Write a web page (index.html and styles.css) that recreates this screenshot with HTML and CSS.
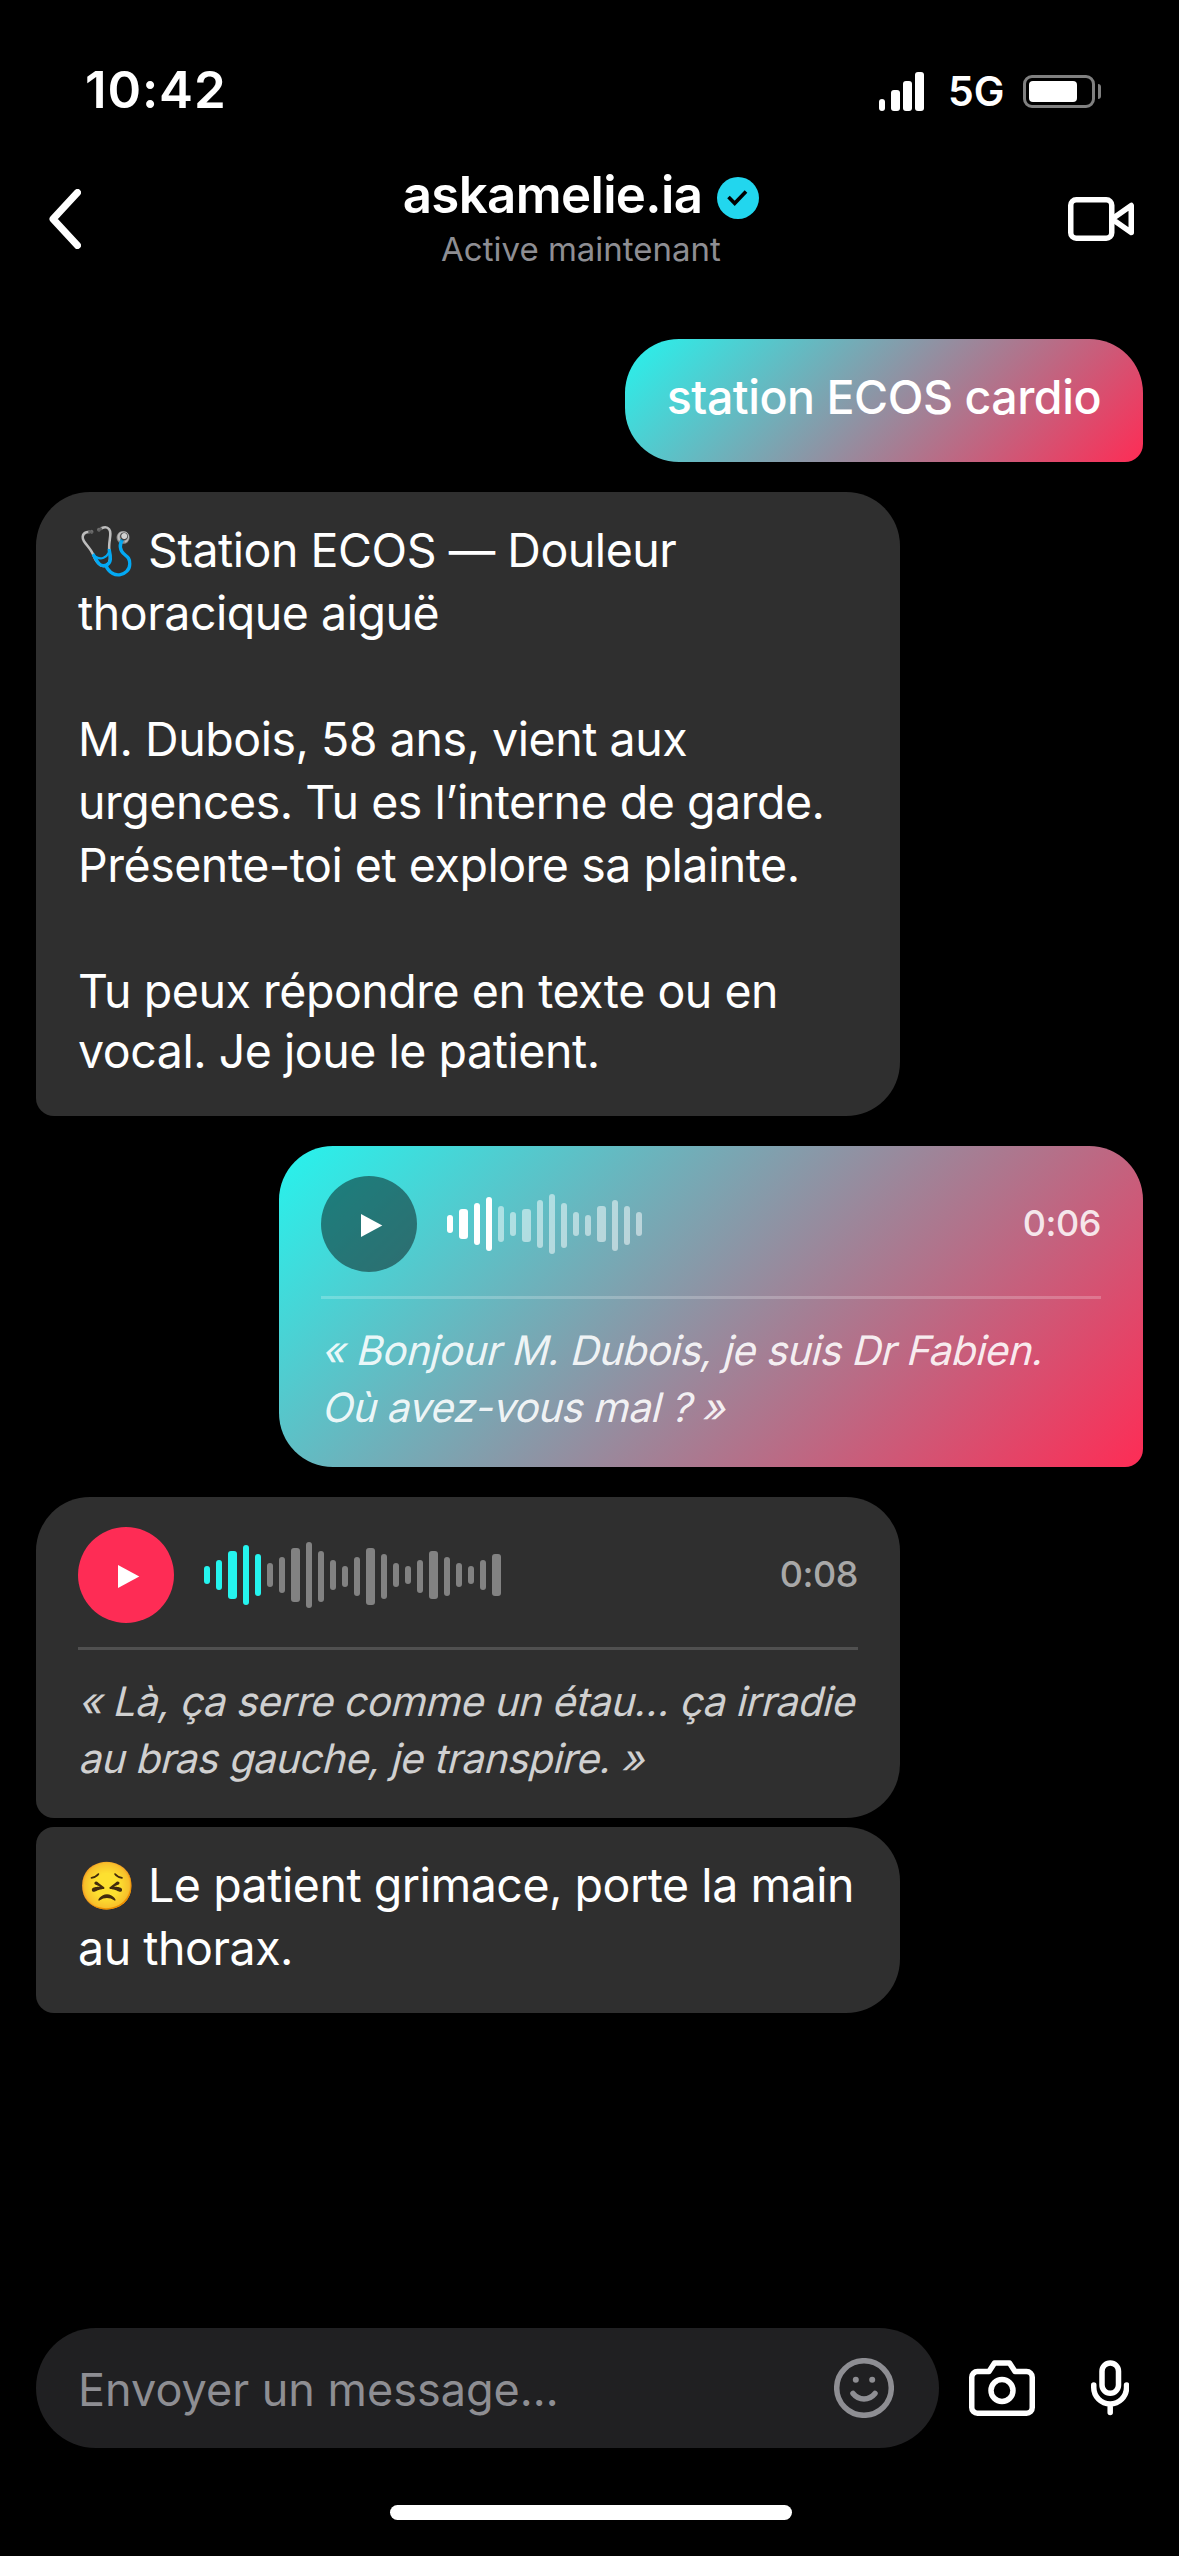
FILE: index.html
```html
<!DOCTYPE html>
<html lang="fr">
<head>
<meta charset="utf-8">
<title>askamelie.ia</title>
<link rel="stylesheet" href="styles.css">
</head>
<body>
<div class="screen">
  <div class="status">
    <span class="clock">10:42</span>
    <div class="status-right">
      <svg class="signal" viewBox="0 0 45 39"><rect x="0" y="27" width="6" height="12" rx="3"/><rect x="12" y="18" width="9" height="21" rx="3"/><rect x="24" y="9" width="9" height="30" rx="3"/><rect x="36" y="0" width="9" height="39" rx="3"/></svg>
      <span class="network">5G</span>
      <div class="battery"><div class="battery-case"><div class="battery-level"></div></div><div class="battery-tip"></div></div>
    </div>
  </div>
  <header class="header">
    <svg class="back" viewBox="0 0 32 60"><path d="M28.5 3.5 4 30l24.500 26.500"/></svg>
    <div class="contact">
      <div class="name">
        <span class="name-text">askamelie.ia</span>
        <svg class="verified" viewBox="0 0 42 42"><circle cx="21" cy="21" r="21"/><path d="M11.500 20l6.200 6.300L29 14.500"/></svg>
      </div>
      <div class="presence">Active maintenant</div>
    </div>
    <svg class="video" viewBox="0 0 66 44"><rect x="2.750" y="2.750" width="41" height="38.500" rx="5.500"/><path d="M44 22 63.250 8.500v27z"/></svg>
  </header>
  <main class="thread">
    <div class="bubble sent short">station ECOS cardio</div>
    <div class="bubble received">
      <p>🩺 Station ECOS — Douleur<br>thoracique aiguë</p>
      <p>M. Dubois, 58 ans, vient aux<br>urgences. Tu es l’interne de garde.<br>Présente-toi et explore sa plainte.</p>
      <p>Tu peux répondre en texte ou en <span class="last-line">vocal. Je joue le patient.</span></p>
    </div>
    <div class="bubble sent voice">
      <div class="player">
        <div class="play"><svg viewBox="0 0 96 96"><path d="M40 38l21.300 11.500L40 61z"/></svg></div>
        <svg class="wave" width="195" height="60" viewBox="0 0 195 60">
          <g class="played"><rect x="0" y="21" width="6" height="18" rx="3"/><rect x="12" y="15" width="9" height="30" rx="3"/><rect x="27" y="9" width="6" height="42" rx="3"/><rect x="39" y="3" width="6" height="54" rx="3"/></g>
          <g class="pending"><rect x="51" y="12" width="6" height="36" rx="3"/><rect x="63" y="18" width="6" height="24" rx="3"/><rect x="75" y="15" width="9" height="33" rx="3"/><rect x="90" y="6" width="6" height="48" rx="3"/><rect x="102" y="0" width="6" height="60" rx="3"/><rect x="114" y="9" width="6" height="45" rx="3"/><rect x="126" y="18" width="6" height="24" rx="3"/><rect x="138" y="21" width="6" height="21" rx="3"/><rect x="150" y="12" width="9" height="36" rx="3"/><rect x="165" y="6" width="6" height="51" rx="3"/><rect x="177" y="12" width="6" height="39" rx="3"/><rect x="189" y="18" width="6" height="24" rx="3"/></g>
        </svg>
        <span class="duration">0:06</span>
      </div>
      <p class="transcript"><span class="slanted">« Bonjour M. Dubois, je suis Dr Fabien.</span> <span class="slanted">Où avez-vous mal ? »</span></p>
    </div>
    <div class="bubble received voice">
      <div class="player">
        <div class="play"><svg viewBox="0 0 96 96"><path d="M40 38l21.300 11.500L40 61z"/></svg></div>
        <svg class="wave" width="297" height="66" viewBox="0 0 297 66">
          <g class="played"><rect x="0" y="24" width="6" height="18" rx="3"/><rect x="12" y="18" width="6" height="30" rx="3"/><rect x="24" y="9" width="9" height="48" rx="3"/><rect x="39" y="3" width="6" height="60" rx="3"/><rect x="51" y="12" width="6" height="42" rx="3"/></g>
          <g class="pending"><rect x="63" y="21" width="6" height="24" rx="3"/><rect x="75" y="15" width="6" height="36" rx="3"/><rect x="87" y="6" width="9" height="54" rx="3"/><rect x="102" y="0" width="6" height="66" rx="3"/><rect x="114" y="9" width="6" height="51" rx="3"/><rect x="126" y="18" width="6" height="30" rx="3"/><rect x="138" y="24" width="6" height="21" rx="3"/><rect x="150" y="15" width="6" height="39" rx="3"/><rect x="162" y="6" width="9" height="57" rx="3"/><rect x="177" y="12" width="6" height="45" rx="3"/><rect x="189" y="21" width="6" height="24" rx="3"/><rect x="201" y="24" width="6" height="18" rx="3"/><rect x="213" y="18" width="6" height="33" rx="3"/><rect x="225" y="9" width="9" height="48" rx="3"/><rect x="240" y="15" width="6" height="39" rx="3"/><rect x="252" y="21" width="6" height="24" rx="3"/><rect x="264" y="24" width="6" height="18" rx="3"/><rect x="276" y="18" width="6" height="30" rx="3"/><rect x="288" y="12" width="9" height="42" rx="3"/></g>
        </svg>
        <span class="duration">0:08</span>
      </div>
      <p class="transcript"><span class="slanted">« Là, ça serre comme un étau… ça irradie</span> <span class="slanted">au bras gauche, je transpire. »</span></p>
    </div>
    <div class="bubble received follow">😣 Le patient grimace, porte la main<br>au thorax.</div>
  </main>
  <footer class="composer">
    <div class="field">
      <span class="placeholder">Envoyer un message…</span>
      <svg class="smiley" viewBox="0 0 60 60"><circle class="line" cx="30" cy="30" r="27.300"/><path class="line" d="M19 35.500q4.500 5.500 11 5.500t11-5.500"/><circle cx="21.800" cy="21.800" r="3"/><circle cx="38.200" cy="21.800" r="3"/></svg>
    </div>
    <svg class="camera" viewBox="0 0 66 56"><path d="M8.500 11.500h11.500L25.500 3h15L46 11.500h11.500a5.750 5.750 0 0 1 5.750 5.750v30.250a5.750 5.750 0 0 1-5.750 5.750h-49a5.750 5.750 0 0 1-5.750-5.750v-30.250a5.750 5.750 0 0 1 5.750-5.750z"/><circle cx="33" cy="30.500" r="11"/></svg>
    <svg class="mic" viewBox="0 0 38 56"><rect x="11" y="3" width="16.500" height="30.300" rx="8.250"/><path d="M2.750 25v2.500a16.400 16.400 0 0 0 32.800 0V25M19.200 44v8.500"/></svg>
  </footer>
  <div class="home-bar"></div>
</div>
</body>
</html>
```
FILE: styles.css
```css
* { box-sizing: border-box; margin: 0; }
body { background: #000; color: #fff; font-family: Inter, "Noto Color Emoji", sans-serif; }
svg { display: block; flex: none; }

.screen { width: 1179px; height: 2556px; display: flex; flex-direction: column; overflow: hidden; }

.status { height: 159px; padding: 45px 78px 0 85px; display: flex; justify-content: space-between; align-items: flex-start; }
.clock { font-size: 51px; line-height: 89px; font-weight: 600; letter-spacing: .017em; }
.status-right { height: 93px; display: flex; align-items: center; }
.signal { width: 45px; height: 39px; fill: #fff; }
.network { width: 57px; margin: 0 18px 0 24px; padding-bottom: 2px; font-size: 41px; line-height: 60px; font-weight: 600; }
.battery { display: flex; align-items: center; gap: 3px; }
.battery-case { width: 72px; height: 33px; padding: 3px; border: 3px solid #808080; border-radius: 9px; }
.battery-level { width: 48px; height: 21px; border-radius: 4px; background: #fff; }
.battery-tip { width: 3px; height: 15px; border-radius: 0 3px 3px 0; background: #808080; }

.header { height: 120px; padding: 0 45px 0 49px; display: flex; justify-content: space-between; align-items: center; }
.back { width: 32px; height: 60px; fill: none; stroke: #fff; stroke-width: 7; stroke-linecap: round; stroke-linejoin: round; }
.contact { padding-left: 13px; display: flex; flex-direction: column; align-items: center; }
.name { height: 60px; display: flex; align-items: center; gap: 15px; font-size: 51px; line-height: 60px; font-weight: 600; letter-spacing: -.65px; }
.name-text { padding-bottom: 6px; }
.verified { width: 42px; height: 42px; }
.verified circle { fill: #22d6ee; }
.verified path { fill: none; stroke: #000; stroke-width: 3.6; }
.presence { font-size: 33px; line-height: 42px; color: #8e8e93; }
.video { width: 66px; height: 44px; fill: none; stroke: #fff; stroke-width: 5.5; stroke-linejoin: round; }

.thread { flex: 1; padding: 60px 36px 0; display: flex; flex-direction: column; align-items: flex-start; gap: 30px; }
.bubble { width: 864px; padding: 27px 42px 33px; border-radius: 54px; font-size: 46.5px; line-height: 63px; letter-spacing: -.01em; }
.sent { align-self: flex-end; border-bottom-right-radius: 18px; background: linear-gradient(135deg, #25f4ee, #fe2c55); }
.short { width: auto; font-weight: 500; }
.voice { padding: 30px 42px; }
.received { border-bottom-left-radius: 18px; background: #2f2f2f; }
.bubble p + p:not(.transcript) { margin-top: 63px; }
.last-line { display: block; margin-top: -3px; }
.follow { margin-top: -21px; border-top-left-radius: 18px; }

.player { height: 96px; display: flex; align-items: center; gap: 30px; }
.play { width: 96px; height: 96px; border-radius: 50%; background: rgba(0, 0, 0, .45); }
.play svg { fill: #fff; }
.received .play { background: #fe2c55; }
.wave .played { fill: #fff; }
.wave .pending { fill: rgba(255, 255, 255, .5); }
.received .played { fill: #25f4ee; }
.received .pending { fill: #828282; }
.duration { margin-left: auto; padding-bottom: 1px; font-size: 36px; line-height: 45px; font-weight: 500; color: rgba(255, 255, 255, .85); }
.received .duration { color: #a8a8a8; }
.transcript { margin-top: 24px; padding: 23px 0 1px; border-top: 3px solid rgba(255, 255, 255, .22); font-size: 40.5px; line-height: 57px; color: rgba(255, 255, 255, .9); }
.slanted { display: block; white-space: nowrap; transform: skewX(-14deg); transform-origin: 0 43px; }
.received .transcript { border-color: #505050; color: #d0d0d0; }

.composer { height: 120px; padding: 0 50px 0 36px; display: flex; align-items: center; }
.field { width: 903px; height: 120px; padding: 0 45px 0 42px; border-radius: 60px; background: #202022; display: flex; align-items: center; justify-content: space-between; }
.placeholder { padding-top: 3px; font-size: 45px; color: #8e8e93; }
.smiley { width: 60px; height: 60px; fill: #8e8e93; }
.smiley .line { fill: none; stroke: #8e8e93; stroke-width: 5.5; stroke-linecap: round; }
.camera { width: 66px; height: 56px; margin-left: 30px; }
.mic { width: 38px; height: 56px; margin-left: auto; }
.camera, .mic { fill: none; stroke: #fff; stroke-width: 5.5; stroke-linecap: round; stroke-linejoin: round; }
.home-bar { width: 402px; height: 15px; margin: 57px auto 36px 390px; border-radius: 7.5px; background: #fff; flex: none; }
```
